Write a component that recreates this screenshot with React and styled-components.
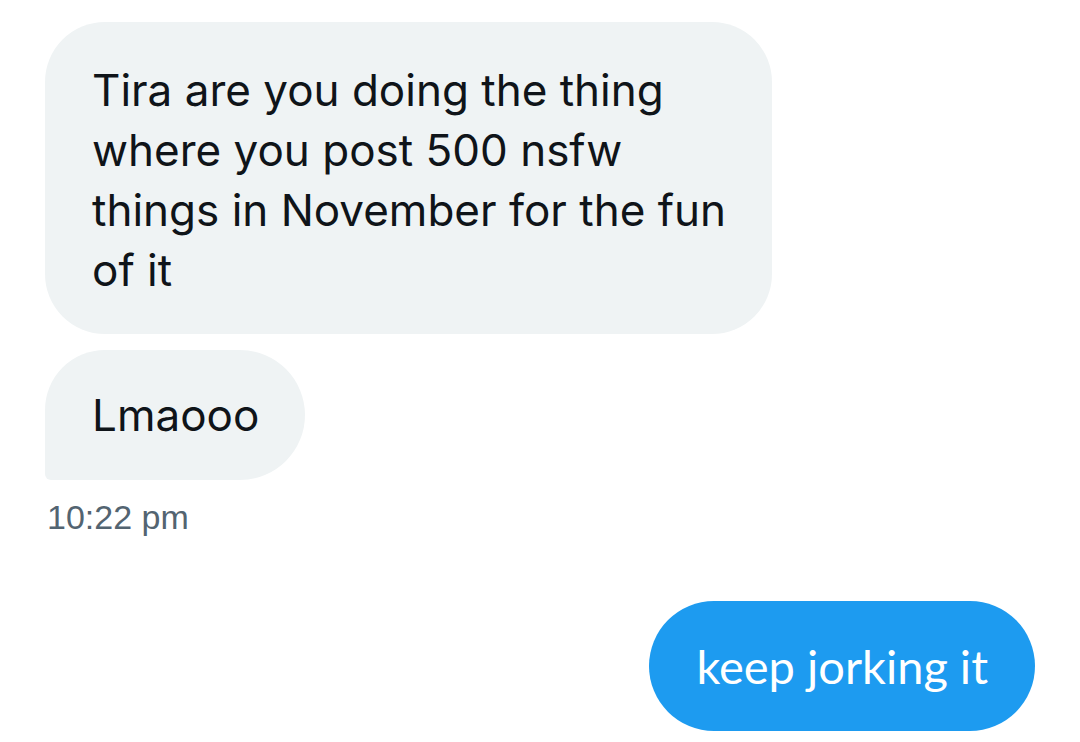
import React from "react";
import styled, { createGlobalStyle } from "styled-components";

const Global = createGlobalStyle`
  html, body { margin: 0; padding: 0; background: #ffffff; }
  body { font-family: Inter, "Noto Sans", sans-serif; }
`;

const Thread = styled.div`
  width: 1080px;
  height: 742px;
  box-sizing: border-box;
  padding: 22px 45px 0 45px;
  display: flex;
  flex-direction: column;
  overflow: hidden;
`;

const Group = styled.div`
  display: flex;
  flex-direction: column;
  align-items: ${(p) => (p.$mine ? "flex-end" : "flex-start")};
  gap: 16px;
  margin-top: ${(p) => p.$top || 0}px;
`;

const Bubble = styled.div`
  box-sizing: border-box;
  padding: ${(p) => p.$pad};
  background: ${(p) => (p.$mine ? "#1d9bf0" : "#eff3f4")};
  color: ${(p) => (p.$mine ? "#ffffff" : "#0f1419")};
  font-family: ${(p) => (p.$mine ? "Lato, sans-serif" : "Inter, sans-serif")};
  font-size: ${(p) => (p.$mine ? 47 : 44)}px;
  line-height: 60px;
  border-radius: ${(p) => p.$radius};
  min-height: 130px;
  display: flex;
  align-items: center;
`;

const Time = styled.div`
  font-family: "Liberation Sans", Arial, sans-serif;
  font-size: 34px;
  line-height: 40px;
  color: #536471;
  margin-top: 17px;
  padding-left: 2px;
`;

export default function App() {
  return (
    <>
      <Global />
      <Thread>
        <Group>
          <Bubble $pad="38px 46px 34px 47px" $radius="60px">
            <div>
              Tira are you doing the thing
              <br />
              where you post 500 nsfw
              <br />
              things in November for the fun
              <br />
              of it
            </div>
          </Bubble>
          <Bubble $pad="0 46px 0 47px" $radius="60px 65px 65px 6px">
            Lmaooo
          </Bubble>
        </Group>
        <Time>10:22 pm</Time>
        <Group $mine $top={64}>
          <Bubble $mine $pad="0 47px 0 47px" $radius="65px">
            keep jorking it
          </Bubble>
        </Group>
      </Thread>
    </>
  );
}
